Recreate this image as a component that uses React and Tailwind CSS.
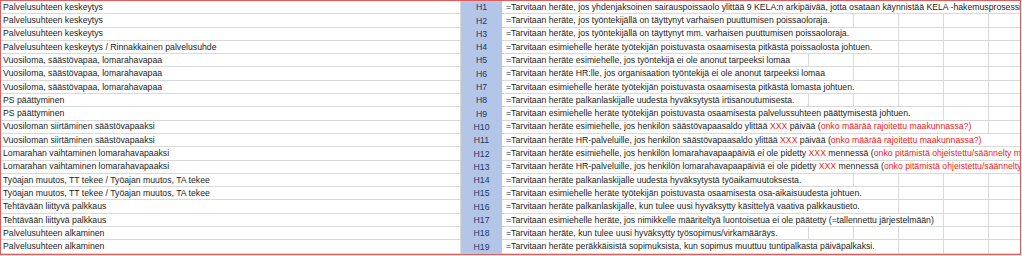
import React from 'react';

// rivit: sarake A, tunnus, kuvaus (punaiset osat objekteina)
const rows = [
  ['Palvelusuhteen keskeytys', 'H1', ['=Tarvitaan heräte, jos yhdenjaksoinen sairauspoissaolo ylittää 9 KELA:n arkipäivää, jotta osataan käynnistää KELA -hakemusprosessi ajoissa.']],
  ['Palvelusuhteen keskeytys', 'H2', ['=Tarvitaan heräte, jos työntekijällä on täyttynyt varhaisen puuttumisen poissaoloraja.']],
  ['Palvelusuhteen keskeytys', 'H3', ['=Tarvitaan heräte, jos työntekijällä on täyttynyt mm. varhaisen puuttumisen poissaoloraja.']],
  ['Palvelusuhteen keskeytys / Rinnakkainen palvelusuhde', 'H4', ['=Tarvitaan esimiehelle heräte työtekijän poistuvasta osaamisesta pitkästä poissaolosta johtuen.']],
  ['Vuosiloma, säästövapaa, lomarahavapaa', 'H5', ['=Tarvitaan heräte esimiehelle, jos työntekijä ei ole anonut tarpeeksi lomaa']],
  ['Vuosiloma, säästövapaa, lomarahavapaa', 'H6', ['=Tarvitaan heräte HR:lle, jos organisaation työntekijä ei ole anonut tarpeeksi lomaa']],
  ['Vuosiloma, säästövapaa, lomarahavapaa', 'H7', ['=Tarvitaan esimiehelle heräte työtekijän poistuvasta osaamisesta pitkästä lomasta johtuen.']],
  ['PS päättyminen', 'H8', ['=Tarvitaan heräte palkanlaskijalle uudesta hyväksytystä irtisanoutumisesta.']],
  ['PS päättyminen', 'H9', ['=Tarvitaan esimiehelle heräte työtekijän poistuvasta osaamisesta palvelussuhteen päättymisestä johtuen.']],
  ['Vuosiloman siirtäminen säästövapaaksi', 'H10', ['=Tarvitaan heräte esimiehelle, jos henkilön säästövapaasaldo ylittää ', { red: 'XXX' }, ' päivää (', { red: 'onko määrää rajoitettu maakunnassa?)' }]],
  ['Vuosiloman siirtäminen säästövapaaksi', 'H11', ['=Tarvitaan heräte HR-palveluille, jos henkilön säästövapaasaldo ylittää ', { red: 'XXX' }, ' päivää (', { red: 'onko määrää rajoitettu maakunnassa?)' }]],
  ['Lomarahan vaihtaminen lomarahavapaaksi', 'H12', ['=Tarvitaan heräte esimiehelle, jos henkilön lomarahavapaapäiviä ei ole pidetty ', { red: 'XXX' }, ' mennessä (', { red: 'onko pitämistä ohjeistettu/säännelty maakunnassa?)' }]],
  ['Lomarahan vaihtaminen lomarahavapaaksi', 'H13', ['=Tarvitaan heräte HR-palveluille, jos henkilön lomarahavapaapäiviä ei ole pidetty ', { red: 'XXX' }, ' mennessä (', { red: 'onko pitämistä ohjeistettu/säännelty maakunnassa?)' }]],
  ['Työajan muutos, TT tekee / Työajan muutos, TA tekee', 'H14', ['=Tarvitaan heräte palkanlaskijalle uudesta hyväksytystä työaikamuutoksesta.']],
  ['Työajan muutos, TT tekee / Työajan muutos, TA tekee', 'H15', ['=Tarvitaan esimiehelle heräte työtekijän poistuvasta osaamisesta osa-aikaisuudesta johtuen.']],
  ['Tehtävään liittyvä palkkaus', 'H16', ['=Tarvitaan heräte palkanlaskijalle, kun tulee uusi hyväksytty käsittelyä vaativa palkkaustieto.']],
  ['Tehtävään liittyvä palkkaus', 'H17', ['=Tarvitaan esimiehelle heräte, jos nimikkelle määriteltyä luontoisetua ei ole päätetty (=tallennettu järjestelmään)']],
  ['Palvelusuhteen alkaminen', 'H18', ['=Tarvitaan heräte, kun tulee uusi hyväksytty työsopimus/virkamääräys.']],
  ['Palvelusuhteen alkaminen', 'H19', ['=Tarvitaan heräte peräkkäisistä sopimuksista, kun sopimus muuttuu tuntipalkasta päiväpalkaksi.']],
];

function Row({ area, code, parts }) {
  return (
    <div className="flex h-[13.3px] shrink-0">
      <div className="w-[460px] shrink-0 flex items-center pl-[2px] border-b border-r border-[#d9d9d9] whitespace-nowrap">
        {area}
      </div>
      <div className="w-[41px] shrink-0 flex items-center justify-center bg-[#b4c6e7] text-[#203864]">
        {code}
      </div>
      <div className="flex-1 min-w-0 flex overflow-hidden border-b border-[#d9d9d9] bg-[linear-gradient(to_right,transparent_44px,#d9d9d9_44px)] bg-[length:45px_100%] bg-[position:37px_0] bg-repeat-x">
        <span className="flex items-center bg-white whitespace-nowrap pl-[4px] pr-[8px]">
          {parts.map((p, i) =>
            typeof p === 'string' ? (
              <span key={i} className="whitespace-pre">{p}</span>
            ) : (
              <span key={i} className="whitespace-pre text-[#f01818]">{p.red}</span>
            )
          )}
        </span>
      </div>
    </div>
  );
}

export default function App() {
  return (
    <div className="w-[1022px] h-[256px] bg-[#eef2f7] overflow-hidden">
      <div className="w-[1021px] h-[255px] border border-[#e25c5c] bg-white flex flex-col overflow-hidden font-['Liberation_Sans',Arial,sans-serif] text-[8.7px] leading-none text-[#1c1c1c]">
        {rows.map(([area, code, parts]) => (
          <Row key={code} area={area} code={code} parts={parts} />
        ))}
      </div>
    </div>
  );
}
